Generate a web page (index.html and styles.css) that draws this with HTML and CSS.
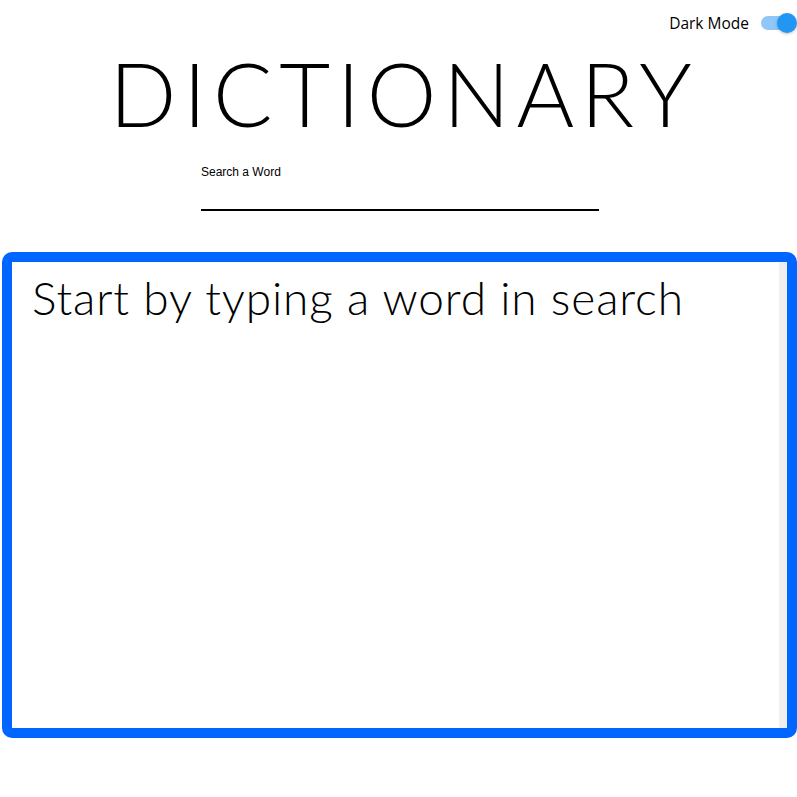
FILE: index.html
```html
<!DOCTYPE html>
<html>
<head>
<meta charset="utf-8">
<link rel="stylesheet" href="styles.css">
</head>
<body>
<div class="topbar">
  <span class="mode-label">Dark Mode</span>
  <span class="switch"><span class="track"></span><span class="thumb"></span></span>
</div>
<h1 class="title">DICTIONARY</h1>
<div class="search">
  <label class="search-label">Search a Word</label>
  <div class="search-input"></div>
</div>
<div class="result">
  <div class="result-content">
    <p class="placeholder">Start by typing a word in search</p>
  </div>
  <div class="scrolltrack"></div>
</div>
</body>
</html>
```
FILE: styles.css
```css
html, body { margin: 0; padding: 0; background: #fff; }
body { width: 797px; height: 797px; overflow: hidden; font-family: "Liberation Sans", Arial, sans-serif; color: #000; }
.topbar { height: 46px; display: flex; justify-content: flex-end; align-items: center; }
.mode-label { font-family: "Open Sans", "Liberation Sans", sans-serif; font-size: 15.5px; margin-right: 10px; margin-top: -1px; }
.switch { position: relative; width: 38px; height: 20px; }
.track { position: absolute; left: 2px; top: 3px; width: 32px; height: 14px; border-radius: 7px; background: #8ec7f8; }
.thumb { position: absolute; left: 18px; top: 0; width: 20px; height: 20px; border-radius: 50%; background: #2196f3; box-shadow: 0 1px 3px rgba(0,0,0,0.25); }
.title { margin: -3px 0 0; text-align: center; font-family: "Lato", sans-serif; font-weight: 300; font-size: 88px; line-height: 100px; letter-spacing: 6.8px; height: 100px; padding-left: 11px; }
.search { width: 398px; margin: 22px auto 0; padding-left: 3px; }
.search-label { display: block; font-size: 12px; line-height: 14px; height: 14px; }
.search-input { height: 30px; border-bottom: 2px solid #000; }
.result { margin: 41px 0 0 2px; width: 775px; height: 466px; border: 10px solid #0066ff; border-radius: 10px; display: flex; }
.result-content { flex: 1; padding: 10px 20px; }
.scrolltrack { width: 8px; background: #efefef; }
.placeholder { margin: 0; font-family: "Lato", sans-serif; font-weight: 300; font-size: 46px; line-height: 52px; letter-spacing: 0.87px; }
```
